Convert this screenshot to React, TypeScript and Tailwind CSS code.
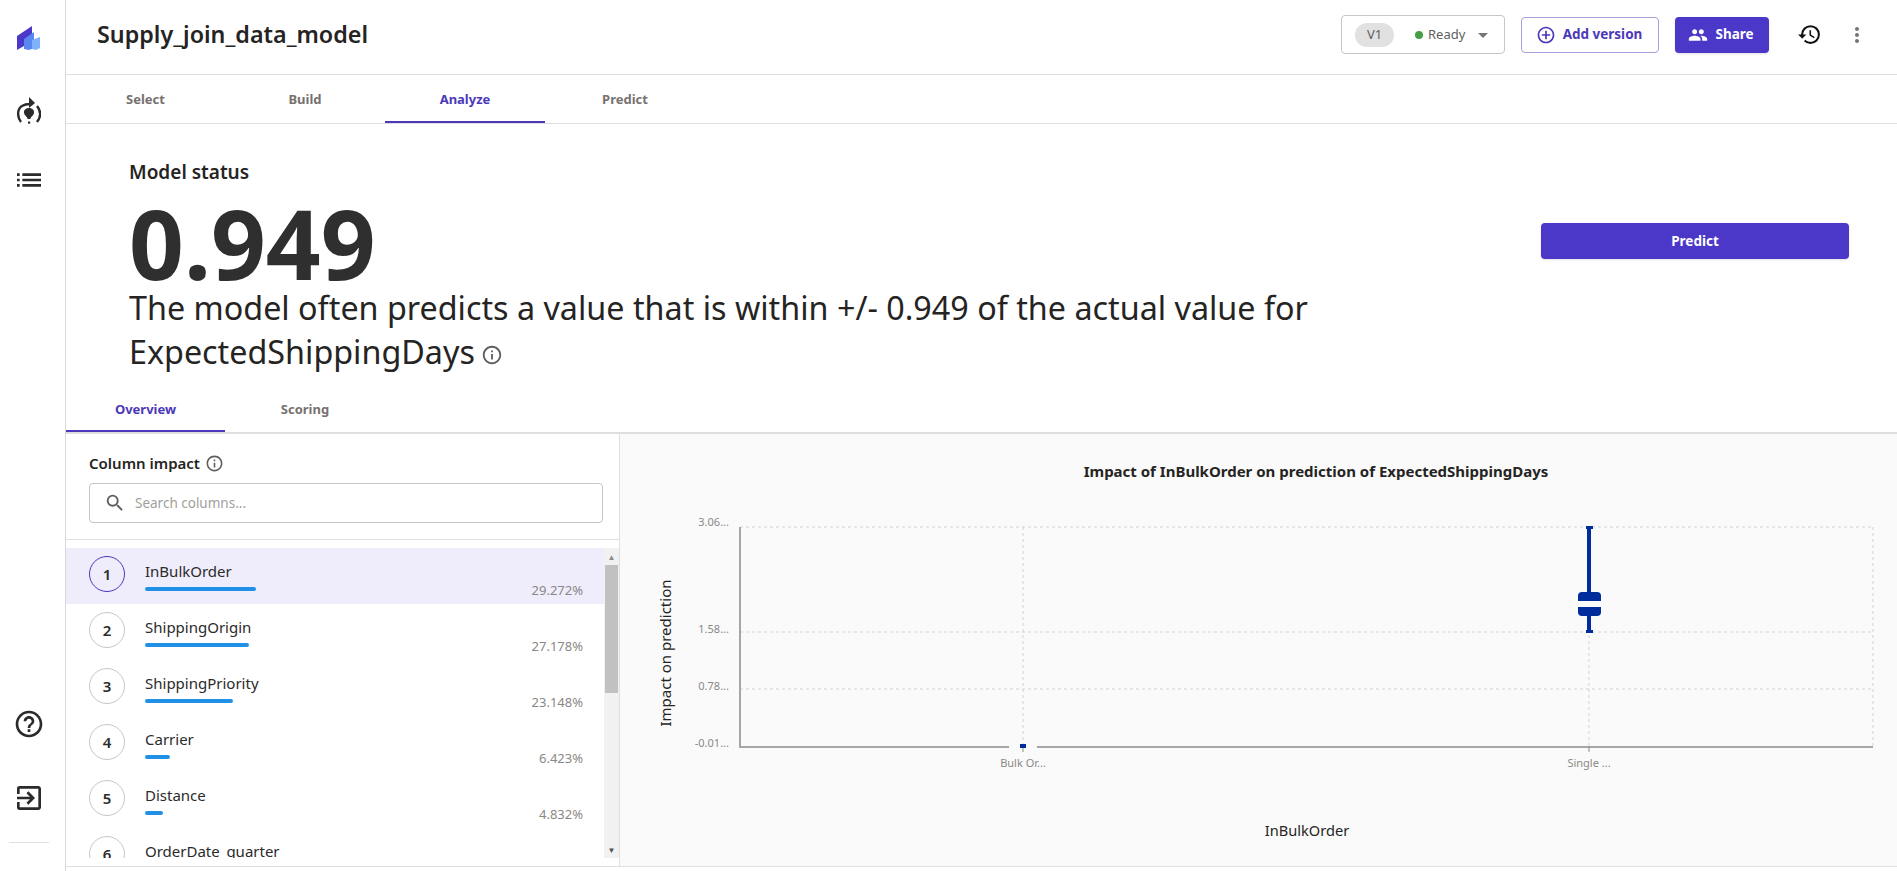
import { MdAddCircleOutline, MdArrowDropDown, MdExitToApp, MdHelpOutline, MdHistory, MdInfoOutline, MdList, MdMoreVert, MdPeople, MdSearch } from "react-icons/md";

const columns = [
    { name: "InBulkOrder", pct: "29.272%", bar: 111 },
    { name: "ShippingOrigin", pct: "27.178%", bar: 104 },
    { name: "ShippingPriority", pct: "23.148%", bar: 88 },
    { name: "Carrier", pct: "6.423%", bar: 25 },
    { name: "Distance", pct: "4.832%", bar: 18 },
    { name: "OrderDate_quarter", pct: "", bar: 0 },
];

function Logo() {
    return (
        <svg width="24" height="25" viewBox="0 0 24 25">
            <path d="M0 10 L15 0 V22 L7 20 L0 24 Z" fill="#4b38c9" />
            <path d="M7 13 L17 6 V22 L12 24 L7 23 Z" fill="#5a86f0" />
            <path d="M15 14 L23 11 V22 L19 24 L15 23 Z" fill="#7fb2fb" />
        </svg>
    );
}

function ModelIcon() {
    return (
        <svg width="24" height="27" viewBox="0 0 24 27" fill="none">
            <path d="M4 25 C0 20 0 12 5 9 C8 7 10 7 13 7" stroke="#2b2b2b" strokeWidth="2.4" />
            <path d="M20 25 C24 20 24 14 20 9" stroke="#2b2b2b" strokeWidth="2.4" />
            <path d="M12 0 L18 6 L12 11 Z" fill="#2b2b2b" />
            <path d="M12 11 C15.5 11 17.5 13.5 17 16 C16.5 18.5 14 19.5 13.3 22 H10.7 C10 19.5 7.5 18.5 7 16 C6.5 13.5 8.5 11 12 11 Z" fill="#2b2b2b" />
            <rect x="11" y="24.5" width="2.2" height="2.2" fill="#2b2b2b" />
        </svg>
    );
}

function Tab({ label, active, widthClass = "w-40" }: { label: string; active?: boolean; widthClass?: string }) {
    return (
        <div className={`${widthClass} h-full pt-[3px] flex items-center justify-center text-[13px] font-bold border-b-2 ${active ? "text-[#4b38b8] border-[#4b38b8]" : "text-[#77716f] border-transparent"}`}>
            {label}
        </div>
    );
}

function Row({ index, name, pct, bar }: { index: number; name: string; pct: string; bar: number }) {
    const selected = index === 1;
    return (
        <div className={`h-14 shrink-0 flex pl-[23px] pr-[21px] ${selected ? "bg-[#efecfc]" : ""}`}>
            <div className={`mt-2 w-9 h-9 shrink-0 rounded-full flex items-center justify-center text-[15px] font-semibold text-[#2b2b2b] border ${selected ? "border-[#4b38b8]" : "border-[#c8c6c4]"}`}>
                {index}
            </div>
            <div className="ml-5 flex-1 pt-[13px]">
                <div className="text-[15px] leading-[21px] text-[#2b2b2b]">{name}</div>
                <div className="mt-[5px] h-1 rounded-sm bg-[#2091e6]" style={{ width: bar }} />
            </div>
            <div className="pt-[33px] text-[13px] leading-[18px] text-[#8a8886]">{pct}</div>
        </div>
    );
}

function Chart() {
    const tick = "#a6a6a6";
    const grid = "#d2d2d2";
    return (
        <svg width="1277" height="433" viewBox="620 434 1277 433" className="block" fontFamily="'Noto Sans', sans-serif">
            <text x="1316" y="477" textAnchor="middle" fontSize="15" fontWeight="700" fill="#252423">Impact of InBulkOrder on prediction of ExpectedShippingDays</text>
            {[527, 632, 689].map((y) => (
                <line key={y} x1="740" x2="1873" y1={y} y2={y} stroke={grid} strokeDasharray="3 3" />
            ))}
            {[1023, 1589, 1873].map((x) => (
                <line key={x} x1={x} x2={x} y1="527" y2="747" stroke={grid} strokeDasharray="3 3" />
            ))}
            <line x1="740" x2="740" y1="527" y2="748" stroke={tick} strokeWidth="2" />
            <line x1="740" x2="1873" y1="747" y2="747" stroke={tick} strokeWidth="2" />
            <rect x="1009" y="745" width="28" height="4" fill="#fafafa" />
            <line x1="1023" x2="1023" y1="747" y2="752" stroke="#8a8a8a" />
            <line x1="1589" x2="1589" y1="747" y2="752" stroke="#8a8a8a" />
            <rect x="1020" y="744" width="6" height="4" fill="#002d9c" />
            <rect x="1587" y="527" width="4" height="105" fill="#002d9c" />
            <rect x="1586" y="526" width="7" height="3" fill="#002d9c" />
            <rect x="1586" y="630" width="7" height="3" fill="#002d9c" />
            <rect x="1578" y="592" width="23" height="24" rx="4" fill="#002d9c" />
            <rect x="1578" y="601" width="23" height="6" fill="#fafafa" />
            <g fontSize="11" fill="#8a8886" textAnchor="end">
                <text x="729" y="526">3.06...</text>
                <text x="729" y="633">1.58...</text>
                <text x="729" y="690">0.78...</text>
                <text x="729" y="747">-0.01...</text>
            </g>
            <g fontSize="11" fill="#8a8886" textAnchor="middle">
                <text x="1023" y="767">Bulk Or...</text>
                <text x="1589" y="767">Single ...</text>
            </g>
            <text transform="translate(671 653) rotate(-90)" textAnchor="middle" fontSize="15" fill="#252423">Impact on prediction</text>
            <text x="1307" y="836" textAnchor="middle" fontSize="14.6" fill="#252423">InBulkOrder</text>
        </svg>
    );
}

export default function App() {
    return (
        <div className="w-[1897px] h-[871px] overflow-hidden bg-white flex text-[#252423] font-['Noto_Sans',sans-serif]">

            {/* Left nav rail */}
            <div className="w-[66px] shrink-0 border-r border-[#d9d9d9] pr-[7px] flex flex-col items-center">
                <div className="mt-[26px] h-[25px]"><Logo /></div>
                <div className="mt-[46px] h-[27px]"><ModelIcon /></div>
                <MdList className="mt-[40px] text-[#2b2b2b]" size={32} />
                <MdHelpOutline className="mt-auto text-[#2b2b2b]" size={32} />
                <MdExitToApp className="mt-[42px] text-[#2b2b2b]" size={32} />
                <div className="mt-[28px] mb-[28px] w-10 border-t border-[#e1e1e1]" />
            </div>

            <div className="flex-1 min-w-0 flex flex-col">

                {/* Header */}
                <div className="h-[75px] shrink-0 border-b border-[#e1dfdd] flex items-center pl-[31px]">
                    <h1 className="text-[23.3px] -mt-[5px] font-semibold text-[#252423]">Supply_join_data_model</h1>
                    <div className="ml-auto -mt-[5px] w-[164px] h-[39px] border border-[#c8c6c4] rounded flex items-center pl-[13px]">
                        <span className="w-[39px] h-6 rounded-full bg-[#e1e1e1] flex items-center justify-center text-[13px] text-[#605e5c]">V1</span>
                        <span className="ml-[21px] w-2 h-2 rounded-full bg-[#43a047]" />
                        <span className="ml-[5px] text-[13px] text-[#605e5c]">Ready</span>
                        <MdArrowDropDown className="ml-[6px] text-[#757575]" size={24} />
                    </div>
                    <button className="ml-4 -mt-[5px] w-[138px] h-9 border border-[#a99fdc] rounded flex items-center justify-center gap-[7px] pr-[2px] text-[13.5px] font-bold text-[#4b38b8]">
                        <MdAddCircleOutline size={20} />
                        Add version
                    </button>
                    <button className="ml-4 -mt-[5px] w-[94px] h-9 bg-[#4b38c9] rounded shadow flex items-center justify-center gap-[7px] pr-[2px] text-[13.5px] font-bold text-white">
                        <MdPeople size={20} />
                        Share
                    </button>
                    <MdHistory className="ml-[28px] -mt-[5px] text-[#111]" size={25} />
                    <MdMoreVert className="ml-[23px] mr-[28px] -mt-[5px] text-[#757575]" size={24} />
                </div>

                {/* Top tabs */}
                <div className="h-[49px] shrink-0 border-b border-[#e1dfdd] flex">
                    <Tab label="Select" widthClass="w-[159px]" />
                    <Tab label="Build" />
                    <Tab label="Analyze" active />
                    <Tab label="Predict" />
                </div>

                {/* Model status */}
                <div className="h-[262px] shrink-0 relative pl-[63px] pt-[35px]">
                    <div className="text-[19px] leading-[26px] font-semibold text-[#252423]">Model status</div>
                    <div className="mt-[10px] text-[96px] leading-[96px] font-bold text-[#2f2f2f]">0.949</div>
                    <div className="w-[1210px] -mt-[6px] text-[32.3px] leading-[44px] text-[#252423]">
                        The model often predicts a value that is within +/- 0.949 of the actual value for ExpectedShippingDays
                        <MdInfoOutline className="inline-block ml-[6px] text-[#605e5c]" size={22} />
                    </div>
                    <button className="absolute top-[99px] right-[48px] w-[308px] h-9 bg-[#4b38c9] rounded shadow text-[13.5px] font-bold text-white">Predict</button>
                </div>

                {/* Sub tabs */}
                <div className="h-[48px] shrink-0 border-b-2 border-[#e1dfdd] flex">
                    <Tab label="Overview" active widthClass="w-[159px]" />
                    <Tab label="Scoring" />
                </div>

                {/* Bottom split */}
                <div className="flex-1 min-h-0 flex border-b border-[#e1dfdd] mb-1">
                    <div className="w-[554px] shrink-0 border-r border-[#e1dfdd] flex flex-col">
                        <div className="h-[106px] shrink-0 border-b border-[#e1dfdd] px-[23px] pt-[19px]">
                            <div className="flex items-center gap-[5px] h-5 text-[15px] font-semibold text-[#252423]">
                                Column impact
                                <MdInfoOutline className="text-[#605e5c]" size={19} />
                            </div>
                            <div className="mt-[10px] w-[514px] h-10 border border-[#c8c6c4] rounded flex items-center pl-[14px] gap-[9px]">
                                <MdSearch className="text-[#605e5c]" size={22} />
                                <span className="text-[13.5px] text-[#a19f9d]">Search columns...</span>
                            </div>
                        </div>
                        <div className="mt-2 h-[310px] flex min-h-0">
                            <div className="flex-1 min-w-0 flex flex-col overflow-hidden">
                                {columns.map((c, i) => (
                                    <Row key={c.name} index={i + 1} name={c.name} pct={c.pct} bar={c.bar} />
                                ))}
                            </div>
                            {/* Scrollbar */}
                            <div className="w-[15px] shrink-0 bg-[#f1f1f1] flex flex-col">
                                <div className="h-[17px] flex items-center justify-center text-[#8a8a8a] text-[8px]">▲</div>
                                <div className="h-[128px] mx-[1px] bg-[#c1c1c1]" />
                                <div className="mt-auto h-[17px] flex items-center justify-center text-[#505050] text-[8px]">▼</div>
                            </div>
                        </div>
                    </div>
                    <div className="flex-1 min-w-0 bg-[#fafafa]">
                        <Chart />
                    </div>
                </div>
            </div>
        </div>
    );
}
